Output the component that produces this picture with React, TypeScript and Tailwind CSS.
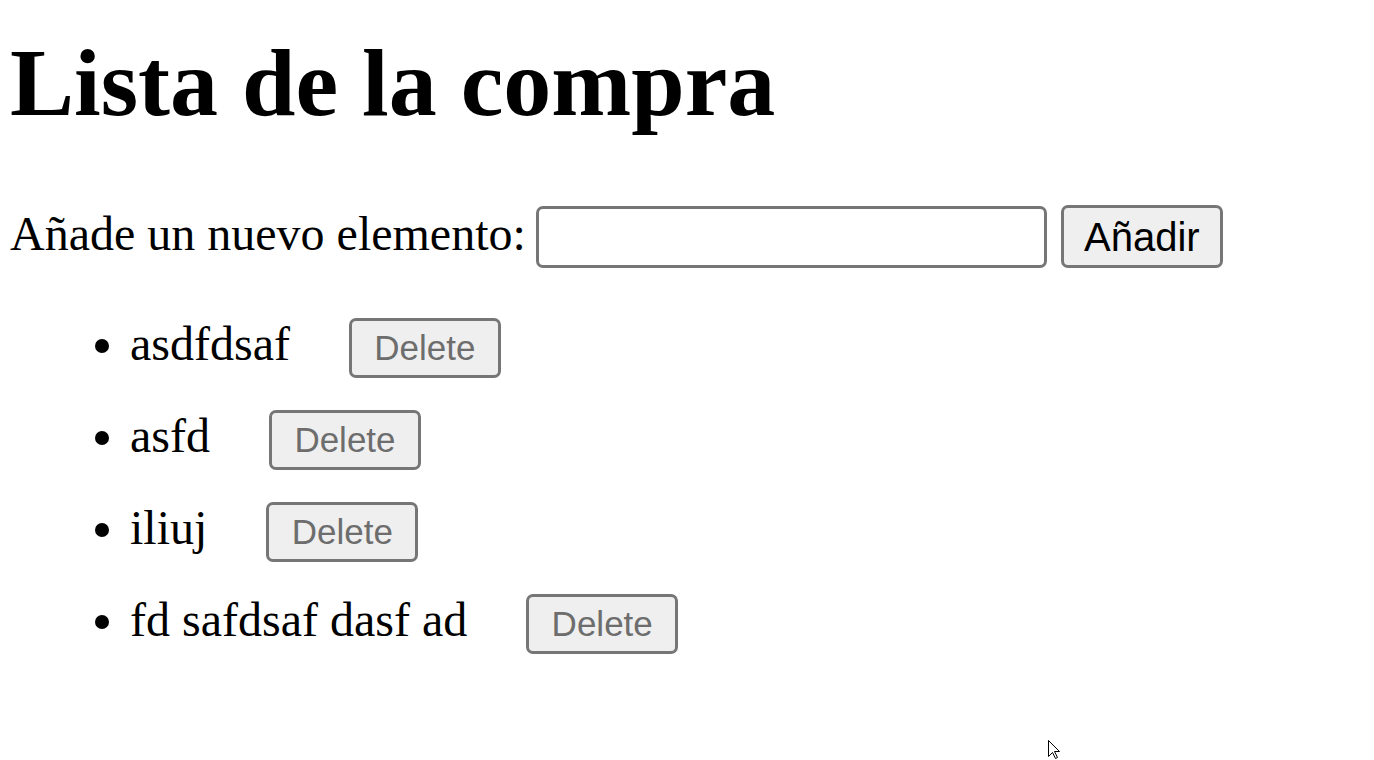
import { useState } from "react";

const serif = "font-['Liberation_Serif','Times_New_Roman',serif]";
const sans = "font-['Liberation_Sans',Arial,sans-serif]";

export default function App() {
  const [items, setItems] = useState<string[]>(["asdfdsaf", "asfd", "iliuj", "fd safdsaf dasf ad"]);
  const [text, setText] = useState("");

  const add = () => {
    if (!text.trim()) return;
    setItems([...items, text.trim()]);
    setText("");
  };

  return (
    <div className={`relative h-screen overflow-hidden bg-white pl-[10px] pt-[30px] text-black ${serif}`}>
      <h1 className="text-[96px] font-bold leading-[106px]">Lista de la compra</h1>

      {/* Nuevo elemento */}
      <div className="mt-[69px] flex items-end">
        <label className="mb-[8px] text-[48px] leading-[53px]">Añade un nuevo elemento:</label>
        <input
          value={text}
          onChange={(e) => setText(e.target.value)}
          className={`ml-[10px] h-[62px] w-[511px] rounded-[7px] border-[3px] border-[#767676] bg-white px-2 text-[40px] outline-none ${sans}`}
        />
        <button
          onClick={add}
          className={`ml-[14px] flex h-[63px] w-[162px] items-center justify-center rounded-[7px] border-[3px] border-[#767676] bg-[#efefef] text-[40px] leading-[46px] text-black ${sans}`}
        >
          Añadir
        </button>
      </div>

      <ul className="mt-[30px] list-disc pl-[120px] text-[48px]">
        {items.map((item, i) => (
          <li key={i} className="leading-[92px]">
            {item}
            <button
              onClick={() => setItems(items.filter((_, j) => j !== i))}
              className={`ml-[59px] inline-flex h-[60px] w-[152px] items-center justify-center rounded-[7px] border-[3px] border-[#767676] bg-[#efefef] align-baseline text-[35px] leading-[46px] text-[#6d6d6d] ${sans}`}
            >
              Delete
            </button>
          </li>
        ))}
      </ul>

      {/* puntero del ratón */}
      <svg className="absolute left-[1048px] top-[740px]" width="13" height="20" viewBox="0 0 13 20">
        <path d="M0.5 0.5 L0.5 16.5 L4.5 12.5 L7.5 18.5 L9.5 17.5 L6.5 11.5 L11.5 11.5 Z" fill="#fff" stroke="#000" strokeWidth="1" />
      </svg>
    </div>
  );
}
